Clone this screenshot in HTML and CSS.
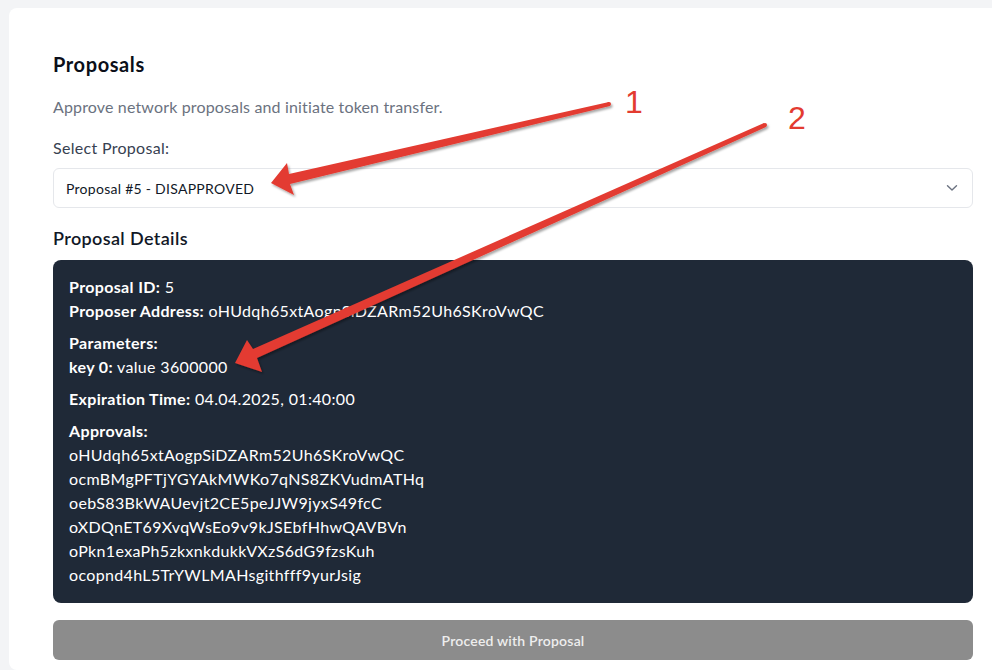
FILE: index.html
```html
<!DOCTYPE html>
<html lang="en">
<head>
<meta charset="utf-8">
<title>Proposals</title>
<link rel="stylesheet" href="styles.css">
</head>
<body>
<main class="card">
  <h2 class="title">Proposals</h2>
  <p class="subtitle">Approve network proposals and initiate token transfer.</p>
  <label class="label">Select Proposal:</label>
  <div class="select">
    <span>Proposal #5 - DISAPPROVED</span>
    <svg class="chev" width="12" height="8" viewBox="0 0 12 8"><path d="M1.5 1.8 L6 6 L10.5 1.8" fill="none" stroke="#6b7280" stroke-width="1.4" stroke-linecap="round" stroke-linejoin="round"/></svg>
  </div>
  <h3 class="section">Proposal Details</h3>
  <div class="details">
    <div class="group">
      <div><b>Proposal ID:</b> 5</div>
      <div><b>Proposer Address:</b> oHUdqh65xtAogpSiDZARm52Uh6SKroVwQC</div>
    </div>
    <div class="group">
      <div><b>Parameters:</b></div>
      <div><b>key 0:</b> value 3600000</div>
    </div>
    <div class="group">
      <div><b>Expiration Time:</b> 04.04.2025, 01:40:00</div>
    </div>
    <div class="group">
      <div><b>Approvals:</b></div>
      <div>oHUdqh65xtAogpSiDZARm52Uh6SKroVwQC</div>
      <div>ocmBMgPFTjYGYAkMWKo7qNS8ZKVudmATHq</div>
      <div>oebS83BkWAUevjt2CE5peJJW9jyxS49fcC</div>
      <div>oXDQnET69XvqWsEo9v9kJSEbfHhwQAVBVn</div>
      <div>oPkn1exaPh5zkxnkdukkVXzS6dG9fzsKuh</div>
      <div>ocopnd4hL5TrYWLMAHsgithfff9yurJsig</div>
    </div>
  </div>
  <button class="proceed" disabled>Proceed with Proposal</button>
</main>

<svg class="annot" width="992" height="670" viewBox="0 0 992 670">
  <defs>
    <filter id="sh" x="-10%" y="-10%" width="120%" height="130%">
      <feDropShadow dx="1.5" dy="2" stdDeviation="1" flood-color="#000" flood-opacity="0.35"/>
    </filter>
  </defs>
  <g fill="#e33b30" filter="url(#sh)">
    <polygon points="271,183 287,163 289,174 609,102 610,106 290,184 294,195"/>
    <circle cx="609" cy="104" r="2"/>
    <polygon points="235,363 247,340 253,349 764,123 766,127 257,358 262,372"/>
    <circle cx="765" cy="125" r="2"/>
  </g>
  <text x="625" y="113" class="num">1</text>
  <text x="788" y="129" class="num">2</text>
</svg>
</body>
</html>
```
FILE: styles.css
```css
* { box-sizing: border-box; }
html, body {
  margin: 0;
  padding: 0;
  width: 992px;
  height: 670px;
  overflow: hidden;
  background: #f3f4f6;
}
body {
  position: relative;
  font-family: Lato, "Noto Sans", sans-serif;
  color: #111827;
  padding: 8px 0 0 9px;
}
.card {
  width: 1008px;
  height: 662px;
  background: #ffffff;
  border-radius: 8px;
  padding: 42px 44px 0;
  display: flex;
  flex-direction: column;
}
.title {
  margin: 0;
  font-size: 20px;
  line-height: 28px;
  font-weight: 700;
  letter-spacing: 0.6px;
  color: #0b0f19;
}
.subtitle {
  margin: 17px 0 0;
  font-size: 16px;
  line-height: 24px;
  letter-spacing: 0.15px;
  color: #6b7280;
}
.label {
  margin-top: 17px;
  font-size: 16px;
  line-height: 24px;
  letter-spacing: 0.3px;
  color: #374151;
}
.select {
  margin-top: 8px;
  height: 40px;
  border: 1px solid #e5e7eb;
  border-radius: 6px;
  display: flex;
  align-items: center;
  justify-content: space-between;
  padding: 0 14px 0 12px;
  font-size: 14px;
  letter-spacing: 0.27px;
  color: #111827;
}
.chev { display: block; }
.section {
  margin: 16px 0 0;
  font-size: 18px;
  line-height: 28px;
  font-weight: 600;
  letter-spacing: 0.37px;
  color: #111827;
}
.details {
  margin-top: 8px;
  background: #1f2937;
  border-radius: 8px;
  padding: 15px 16px 16px;
  color: #ffffff;
  font-size: 16px;
  line-height: 24px;
  letter-spacing: 0.35px;
  display: flex;
  flex-direction: column;
  gap: 8px;
}
.details b { font-weight: 700; }
.proceed {
  margin-top: 17px;
  height: 40px;
  border: none;
  border-radius: 6px;
  background: #8c8c8c;
  color: #eeeeee;
  font-family: Lato, "Noto Sans", sans-serif;
  font-size: 14px;
  font-weight: 600;
  letter-spacing: 0.2px;
}
.annot {
  position: absolute;
  left: 0;
  top: 0;
  pointer-events: none;
}
.num {
  font-family: "Liberation Sans", Arial, sans-serif;
  font-size: 32px;
  fill: #e33b30;
}
```
